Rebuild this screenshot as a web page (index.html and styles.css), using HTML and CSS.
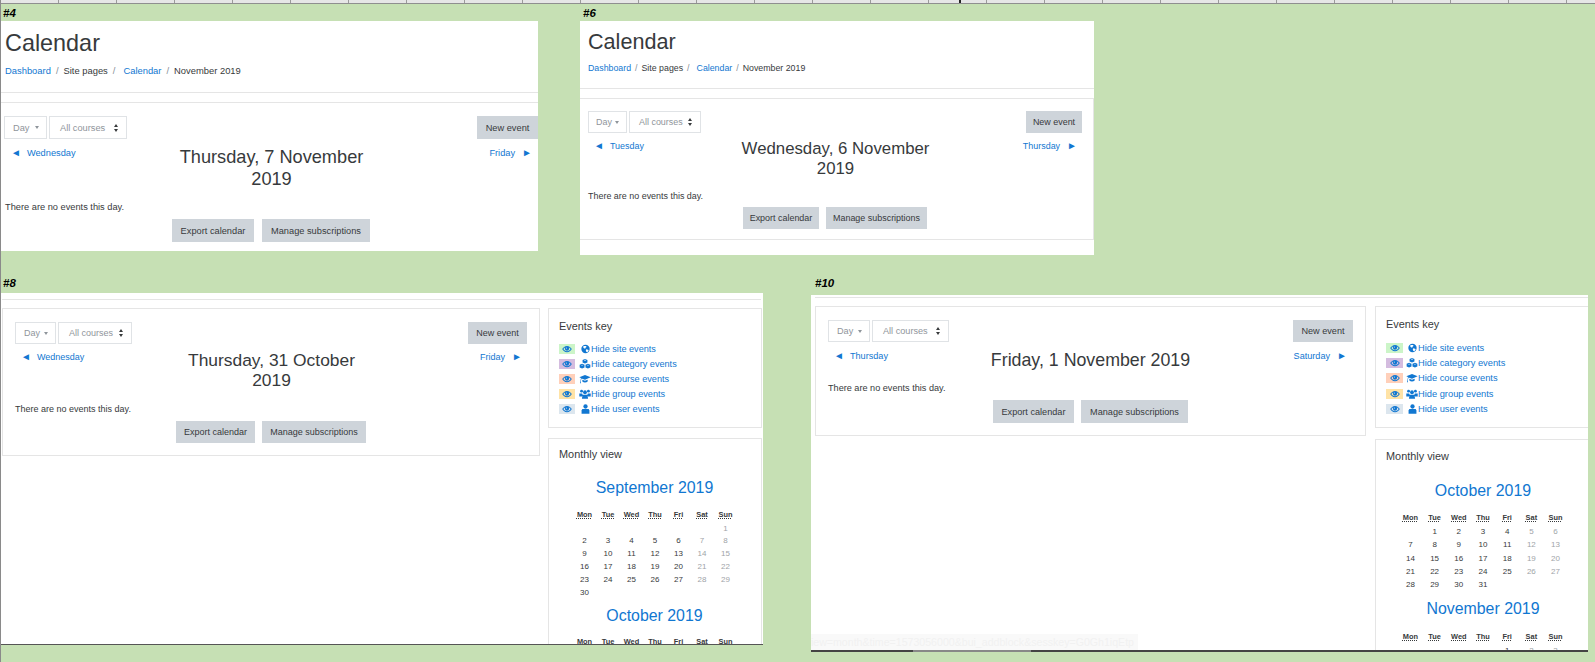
FILE: index.html
```html
<!DOCTYPE html>
<html lang="en">
<head>
  <meta charset="UTF-8">
  <title>Calendar screenshots</title>
  <link rel="stylesheet" href="styles.css">
</head>
<body>
  <svg class="defs" width="0" height="0" aria-hidden="true">
    <symbol id="i-eye" viewBox="0 0 16 12"><path fill-rule="evenodd" d="M8 1C4.600 1 1.900 3.200.3 6c1.600 2.800 4.300 5 7.700 5s6.100-2.200 7.700-5C14.100 3.200 11.400 1 8 1zM2.200 6C3.100 4.700 4.100 3.700 5.400 3 4.900 3.600 4.600 4.300 4.600 5.200c0 1.900 1.500 3.400 3.400 3.400s3.400-1.500 3.400-3.400c0-.9-.3-1.600-.8-2.200 1.300.7 2.300 1.700 3.200 3-1.400 2-3.400 3.600-5.800 3.600S3.600 8 2.200 6z"/><circle cx="7" cy="4.400" r="1" fill="#fff" opacity=".7"/></symbol>
    <symbol id="i-globe" viewBox="0 0 14 14"><path fill-rule="evenodd" d="M7 .5a6.500 6.500 0 1 0 0 13 6.500 6.500 0 0 0 0-13zM3 3.500l2-1.300 3 .2.500 1.600-1.500 1-.5 1.500-2-.5zM8 7.500l3 .5 1 1-2 3-1.500-.2-1-2z"/></symbol>
    <symbol id="i-cubes" viewBox="0 0 16 14"><path fill-rule="evenodd" d="M8 0l3.400 1.300v3.500L8 6.200 4.600 4.800V1.300zM8 1.200L6.400 1.800 8 2.400l1.600-.6zM3.900 6.800l3.400 1.300v3.800l-3.400 1.500L.5 12V8.100zM3.900 8L2.300 8.600l1.600.6 1.600-.6zM12.100 6.800l3.400 1.300V12l-3.400 1.400L8.700 11.900V8.100zM12.100 8l-1.600.6 1.600.6 1.600-.6z"/></symbol>
    <symbol id="i-cap" viewBox="0 0 18 14"><path d="M9 1L.5 4.500 3 5.600 2.200 9.500l-.7 4h1.400l-.1-4 1-3.400L9 8l8.500-3.500zM5 8.200v2.500c1 1.100 2.500 1.700 4 1.700s3-.6 4-1.700V8.200L9 9.800z"/></symbol>
    <symbol id="i-users" viewBox="0 0 16 14"><circle cx="3.200" cy="3" r="2"/><circle cx="12.800" cy="3" r="2"/><circle cx="8" cy="4.500" r="2.700"/><path d="M0 6.200h4l.6 2-1 2.300H0zM12 6.200h4v4.300h-3.600l-1-2.300zM4.500 8h7l.8 5.500H3.700z"/></symbol>
    <symbol id="i-user" viewBox="0 0 12 14"><circle cx="6" cy="3.500" r="3"/><path d="M1.500 7h9l1 2v4.500H.5V9z"/></symbol>
  </svg>

  <div class="ruler"><i class="cursor"></i></div>
  <i class="row-mark"></i>

  <section class="shot shot-4">
    <b class="tag">#4</b>
    <div class="shot-body">
      <header class="page-head">
        <h1>Calendar</h1>
        <nav class="crumbs"><a href="#">Dashboard</a><i>/</i><span>Site pages</span><i>/</i><a class="far" href="#">Calendar</a><i>/</i><span>November 2019</span></nav>
      </header>
      <main class="card">
        <div class="toolbar">
          <div class="filters"><span class="ctl ctl-day">Day<u class="caret"></u></span><span class="ctl ctl-course">All courses<u class="updown"></u></span></div>
          <a class="btn" href="#">New event</a>
        </div>
        <div class="day-nav">
          <a class="prev" href="#"><small>◄</small>Wednesday</a>
          <h2>Thursday, 7 November 2019</h2>
          <a class="next" href="#">Friday<small>►</small></a>
        </div>
        <p class="empty">There are no events this day.</p>
        <div class="actions"><a class="btn" href="#">Export calendar</a><a class="btn" href="#">Manage subscriptions</a></div>
      </main>
    </div>
  </section>

  <section class="shot shot-6">
    <b class="tag">#6</b>
    <div class="shot-body">
      <header class="page-head">
        <h1>Calendar</h1>
        <nav class="crumbs"><a href="#">Dashboard</a><i>/</i><span>Site pages</span><i>/</i><a class="far" href="#">Calendar</a><i>/</i><span>November 2019</span></nav>
      </header>
      <main class="card">
        <div class="toolbar">
          <div class="filters"><span class="ctl ctl-day">Day<u class="caret"></u></span><span class="ctl ctl-course">All courses<u class="updown"></u></span></div>
          <a class="btn" href="#">New event</a>
        </div>
        <div class="day-nav">
          <a class="prev" href="#"><small>◄</small>Tuesday</a>
          <h2>Wednesday, 6 November 2019</h2>
          <a class="next" href="#">Thursday<small>►</small></a>
        </div>
        <p class="empty">There are no events this day.</p>
        <div class="actions"><a class="btn" href="#">Export calendar</a><a class="btn" href="#">Manage subscriptions</a></div>
      </main>
    </div>
  </section>

  <section class="shot shot-8">
    <b class="tag">#8</b>
    <div class="shot-body">
      <div class="top-rule"></div>
      <div class="columns">
        <main class="card">
          <div class="toolbar">
            <div class="filters"><span class="ctl ctl-day">Day<u class="caret"></u></span><span class="ctl ctl-course">All courses<u class="updown"></u></span></div>
            <a class="btn" href="#">New event</a>
          </div>
          <div class="day-nav">
            <a class="prev" href="#"><small>◄</small>Wednesday</a>
            <h2>Thursday, 31 October 2019</h2>
            <a class="next" href="#">Friday<small>►</small></a>
          </div>
          <p class="empty">There are no events this day.</p>
          <div class="actions"><a class="btn" href="#">Export calendar</a><a class="btn" href="#">Manage subscriptions</a></div>
        </main>
        <aside class="side">
          <div class="box">
            <h4>Events key</h4>
            <ul class="key">
              <li><span class="swatch sw-site"><svg><use href="#i-eye"/></svg></span><span class="kicon"><svg class="sm"><use href="#i-globe"/></svg></span><a href="#">Hide site events</a></li>
              <li><span class="swatch sw-cat"><svg><use href="#i-eye"/></svg></span><span class="kicon"><svg><use href="#i-cubes"/></svg></span><a href="#">Hide category events</a></li>
              <li><span class="swatch sw-course"><svg><use href="#i-eye"/></svg></span><span class="kicon"><svg><use href="#i-cap"/></svg></span><a href="#">Hide course events</a></li>
              <li><span class="swatch sw-group"><svg><use href="#i-eye"/></svg></span><span class="kicon"><svg><use href="#i-users"/></svg></span><a href="#">Hide group events</a></li>
              <li><span class="swatch sw-user"><svg><use href="#i-eye"/></svg></span><span class="kicon"><svg class="sm"><use href="#i-user"/></svg></span><a href="#">Hide user events</a></li>
            </ul>
          </div>
          <div class="box">
            <h4>Monthly view</h4>
            <h3><a href="#">September 2019</a></h3>
            <div class="month">
              <b>Mon</b><b>Tue</b><b>Wed</b><b>Thu</b><b>Fri</b><b>Sat</b><b>Sun</b>
              <span></span><span></span><span></span><span></span><span></span><span></span><span class="we">1</span>
              <span>2</span><span>3</span><span>4</span><span>5</span><span>6</span><span class="we">7</span><span class="we">8</span>
              <span>9</span><span>10</span><span>11</span><span>12</span><span>13</span><span class="we">14</span><span class="we">15</span>
              <span>16</span><span>17</span><span>18</span><span>19</span><span>20</span><span class="we">21</span><span class="we">22</span>
              <span>23</span><span>24</span><span>25</span><span>26</span><span>27</span><span class="we">28</span><span class="we">29</span>
              <span>30</span>
            </div>
            <h3><a href="#">October 2019</a></h3>
            <div class="month">
              <b>Mon</b><b>Tue</b><b>Wed</b><b>Thu</b><b>Fri</b><b>Sat</b><b>Sun</b>
            </div>
          </div>
        </aside>
      </div>
    </div>
  </section>

  <section class="shot shot-10">
    <b class="tag">#10</b>
    <div class="shot-body">
      <div class="top-rule"></div>
      <div class="columns">
        <main class="card">
          <div class="toolbar">
            <div class="filters"><span class="ctl ctl-day">Day<u class="caret"></u></span><span class="ctl ctl-course">All courses<u class="updown"></u></span></div>
            <a class="btn" href="#">New event</a>
          </div>
          <div class="day-nav">
            <a class="prev" href="#"><small>◄</small>Thursday</a>
            <h2>Friday, 1 November 2019</h2>
            <a class="next" href="#">Saturday<small>►</small></a>
          </div>
          <p class="empty">There are no events this day.</p>
          <div class="actions"><a class="btn" href="#">Export calendar</a><a class="btn" href="#">Manage subscriptions</a></div>
        </main>
        <aside class="side">
          <div class="box">
            <h4>Events key</h4>
            <ul class="key">
              <li><span class="swatch sw-site"><svg><use href="#i-eye"/></svg></span><span class="kicon"><svg class="sm"><use href="#i-globe"/></svg></span><a href="#">Hide site events</a></li>
              <li><span class="swatch sw-cat"><svg><use href="#i-eye"/></svg></span><span class="kicon"><svg><use href="#i-cubes"/></svg></span><a href="#">Hide category events</a></li>
              <li><span class="swatch sw-course"><svg><use href="#i-eye"/></svg></span><span class="kicon"><svg><use href="#i-cap"/></svg></span><a href="#">Hide course events</a></li>
              <li><span class="swatch sw-group"><svg><use href="#i-eye"/></svg></span><span class="kicon"><svg><use href="#i-users"/></svg></span><a href="#">Hide group events</a></li>
              <li><span class="swatch sw-user"><svg><use href="#i-eye"/></svg></span><span class="kicon"><svg class="sm"><use href="#i-user"/></svg></span><a href="#">Hide user events</a></li>
            </ul>
          </div>
          <div class="box">
            <h4>Monthly view</h4>
            <h3><a href="#">October 2019</a></h3>
            <div class="month">
              <b>Mon</b><b>Tue</b><b>Wed</b><b>Thu</b><b>Fri</b><b>Sat</b><b>Sun</b>
              <span></span><span>1</span><span>2</span><span>3</span><span>4</span><span class="we">5</span><span class="we">6</span>
              <span>7</span><span>8</span><span>9</span><span>10</span><span>11</span><span class="we">12</span><span class="we">13</span>
              <span>14</span><span>15</span><span>16</span><span>17</span><span>18</span><span class="we">19</span><span class="we">20</span>
              <span>21</span><span>22</span><span>23</span><span>24</span><span>25</span><span class="we">26</span><span class="we">27</span>
              <span>28</span><span>29</span><span>30</span><span>31</span>
            </div>
            <h3><a href="#">November 2019</a></h3>
            <div class="month">
              <b>Mon</b><b>Tue</b><b>Wed</b><b>Thu</b><b>Fri</b><b>Sat</b><b>Sun</b>
              <span></span><span></span><span></span><span></span><span>1</span><span class="we">2</span><span class="we">3</span>
            </div>
          </div>
        </aside>
      </div>
      <div class="status-url"><span>view.php?view=month&amp;time=1573056000&amp;bui_addblock&amp;sesskey=G0Gh1iqEtp</span></div>
      <i class="scroll-bar"><i class="scroll-thumb"></i></i>
    </div>
  </section>
</body>
</html>
```

FILE: styles.css
```css
html, body {
  margin: 0;
  height: 100%;
  overflow: hidden;
}

body {
  position: relative;
  background-color: #c6e0b4;
  font-family: "Liberation Sans", Arial, sans-serif;
  border-left: 1px solid #8a8a8a;
  box-sizing: border-box;
}

a {
  color: #1177d1;
  text-decoration: none;
}

.defs {
  position: absolute;
}

/* spreadsheet column header */
.ruler {
  position: absolute;
  left: 0;
  right: 0;
  top: 0;
  height: 3px;
  background: repeating-linear-gradient(to right, #e6e6e6 0, #e6e6e6 57px, #9a9a9a 57px, #9a9a9a 58px);
  border-bottom: 1px solid #8f8f8f;
}

.cursor {
  position: absolute;
  left: 958px;
  top: 0;
  width: 2px;
  height: 3px;
  background: #222;
}

.row-mark {
  position: absolute;
  left: -1px;
  top: 561px;
  width: 1px;
  height: 20px;
  background: #1d7a3c;
}

/* one pasted picture */
.shot {
  position: absolute;
  color: #373a3c;
}

.shot-body {
  position: relative;
  height: 100%;
  overflow: hidden;
  background: #fff;
}

.tag {
  position: absolute;
  color: #000;
  font-size: 11.5px;
  font-style: italic;
  line-height: 12px;
  white-space: nowrap;
}

.page-head {
  box-sizing: border-box;
  border-bottom: 1px solid #e5e5e5;
}

h1 {
  margin: 0;
  font-weight: 400;
}

.crumbs {
  display: flex;
  white-space: nowrap;
}

.crumbs i {
  font-style: normal;
  color: #868e96;
  margin: 0 5px;
}

.crumbs .far {
  margin-left: 3px;
}

.card {
  box-sizing: border-box;
  border: 1px solid #e5e5e5;
}

.toolbar {
  display: flex;
  justify-content: space-between;
  align-items: stretch;
}

.filters {
  display: flex;
  gap: 2px;
}

.ctl {
  display: flex;
  align-items: center;
  justify-content: space-between;
  box-sizing: border-box;
  border: 1px solid #e0e3e6;
  color: #8f959b;
}

.caret {
  width: 0;
  height: 0;
  border: 2.5px solid transparent;
  border-top: 3px solid #8f959b;
  border-bottom: 0;
}

.updown {
  width: 0;
  height: 6px;
  border-left: 2.5px solid transparent;
  border-right: 2.5px solid transparent;
  background: none;
  position: relative;
}

.updown::before,
.updown::after {
  content: "";
  position: absolute;
  left: -2.5px;
  border-left: 2.5px solid transparent;
  border-right: 2.5px solid transparent;
}

.updown::before {
  top: -1px;
  border-bottom: 3px solid #373a3c;
}

.updown::after {
  bottom: -1px;
  border-top: 3px solid #373a3c;
}

.btn {
  display: flex;
  align-items: center;
  justify-content: center;
  box-sizing: border-box;
  background-color: #ced4da;
  color: #373a3c;
  white-space: nowrap;
}

.day-nav {
  display: grid;
  align-items: start;
}

.day-nav small {
  font-size: 10px;
}

.prev small {
  margin-right: 6px;
}

.next {
  text-align: right;
}

.next small {
  margin-left: 7px;
}

h2 {
  margin: 0;
  font-weight: 400;
  text-align: center;
}

.empty {
  margin: 0;
}

.actions {
  display: flex;
  justify-content: center;
}

.columns {
  display: flex;
  align-items: flex-start;
}

.top-rule {
  box-sizing: border-box;
  border-bottom: 1px solid #e5e5e5;
}

.side {
  display: flex;
  flex-direction: column;
  flex: none;
}

.box {
  box-sizing: border-box;
  border: 1px solid #e5e5e5;
}

h4 {
  margin: 0;
  font-size: 10.9px;
  line-height: 14px;
  font-weight: 400;
}

.key {
  list-style: none;
  margin: 0;
  padding: 0;
}

.key li {
  display: flex;
  align-items: center;
  white-space: nowrap;
}

.swatch {
  display: flex;
  align-items: center;
  justify-content: center;
  flex: none;
  width: 16px;
  height: 10px;
}

.swatch svg {
  width: 10px;
  height: 8px;
  fill: #1177d1;
}

.kicon {
  display: flex;
  justify-content: center;
  flex: none;
  width: 12px;
  margin-left: 4px;
}

.kicon svg {
  width: 12px;
  height: 10px;
  fill: #1177d1;
}

.kicon svg.sm {
  width: 9px;
}

.sw-site { background: #ccf5c8; }
.sw-cat { background: #d4bcdf; }
.sw-course { background: #ffd0ba; }
.sw-group { background: #ffe3a6; }
.sw-user { background: #dce6ee; }

h3 {
  margin: 0;
  font-size: 15.9px;
  line-height: 20px;
  font-weight: 400;
  text-align: center;
}

.month {
  display: grid;
  justify-content: center;
  text-align: center;
  font-size: 8px;
}

.month b {
  font-size: 7.4px;
  text-decoration: underline dotted;
}

.we {
  color: #a0a4a8;
}

/* #4 */
.shot-4 { left: 0; top: 21px; width: 537px; height: 230px; }
.shot-4 .tag { left: 2px; top: -14px; }
.shot-4 .shot-body { font-size: 9.25px; line-height: 14px; }
.shot-4 .page-head { height: 72px; padding: 7px 0 0 4px; }
.shot-4 h1 { font-size: 23.4px; line-height: 30px; margin-bottom: 6px; }
.shot-4 .crumbs { font-size: 9.4px; }
.shot-4 .card { margin-top: 9px; padding: 13px 0 0 3px; border-width: 1px 0 0; }
.shot-4 .toolbar { height: 23px; }
.shot-4 .ctl-day { width: 43px; padding: 0 7px 0 8px; }
.shot-4 .ctl-course { width: 78px; padding: 0 8px 0 10px; }
.shot-4 .toolbar .btn { width: 61px; }
.shot-4 .day-nav { grid-template-columns: 1fr 206px 1fr; margin-top: 7px; padding: 0 6px 0 7px; }
.shot-4 h2 { font-size: 18.2px; line-height: 22px; }
.shot-4 .empty { margin-top: 10px; padding-left: 1px; }
.shot-4 .actions { gap: 8px; margin-top: 5px; }
.shot-4 .actions .btn { height: 23px; }
.shot-4 .actions .btn:first-child { width: 82px; }
.shot-4 .actions .btn:last-child { width: 108px; }

/* #6 */
.shot-6 { left: 579px; top: 21px; width: 514px; height: 234px; }
.shot-6 .tag { left: 3px; top: -14px; }
.shot-6 .shot-body { font-size: 8.95px; line-height: 14px; }
.shot-6 .page-head { height: 68px; padding: 6px 0 0 8px; }
.shot-6 h1 { font-size: 21.6px; line-height: 30px; margin-bottom: 4px; }
.shot-6 .crumbs { font-size: 8.8px; }
.shot-6 .crumbs i { margin: 0 4px; }
.shot-6 .crumbs .far { margin-left: 3px; }
.shot-6 .card { margin-top: 9px; padding: 12px 11px 11px 8px; height: 142px; border-width: 1px 1px 1px 0; }
.shot-6 .toolbar { height: 22px; }
.shot-6 .ctl-day { width: 39px; padding: 0 7px 0 7px; }
.shot-6 .ctl-course { width: 72px; padding: 0 8px 0 9px; }
.shot-6 .toolbar .btn { width: 56px; }
.shot-6 .day-nav { grid-template-columns: 1fr 220px 1fr; margin-top: 6px; padding: 0 5px 0 6px; }
.shot-6 h2 { font-size: 16.8px; line-height: 20px; }
.shot-6 .empty { margin-top: 10px; }
.shot-6 .actions { gap: 7px; margin-top: 4px; }
.shot-6 .actions .btn { height: 22px; }
.shot-6 .actions .btn:first-child { width: 76px; }
.shot-6 .actions .btn:last-child { width: 101px; }

/* #8 */
.shot-8 { left: 0; top: 293px; width: 762px; height: 352px; }
.shot-8 .tag { left: 2px; top: -16px; }
.shot-8 .shot-body { font-size: 9px; line-height: 14px; border-bottom: 1px solid #555; box-sizing: border-box; }
.shot-8 .top-rule { height: 7px; margin: 0 2px 0 1px; }
.shot-8 .columns { margin-top: 8px; padding-left: 1px; gap: 8px; }
.shot-8 .card { width: 538px; height: 148px; padding: 13px 12px 12px 12px; }
.shot-8 .toolbar { height: 22px; }
.shot-8 .ctl-day { width: 41px; padding: 0 7px 0 8px; }
.shot-8 .ctl-course { width: 74px; padding: 0 8px 0 10px; }
.shot-8 .toolbar .btn { width: 59px; }
.shot-8 .day-nav { grid-template-columns: 1fr 190px 1fr; margin-top: 6px; padding: 0 5px 0 6px; }
.shot-8 h2 { font-size: 17.4px; line-height: 20px; }
.shot-8 .empty { margin-top: 12px; }
.shot-8 .actions { gap: 7px; margin-top: 5px; }
.shot-8 .actions .btn { height: 22px; }
.shot-8 .actions .btn:first-child { width: 79px; }
.shot-8 .actions .btn:last-child { width: 104px; }
.shot-8 .side { width: 214px; gap: 10px; }
.shot-8 .box:first-child { height: 120px; padding: 10px 0 0 10px; }
.shot-8 .box:last-child { height: 220px; padding: 8px 0 0 10px; }
.shot-8 .key { margin-top: 8px; font-size: 9.15px; }
.shot-8 .key li { height: 15px; }
.shot-8 h3 { margin: 17px 11px 10px 0; }
.shot-8 .month { grid-template-columns: repeat(7, 23.5px); grid-auto-rows: 13px; line-height: 13px; margin-right: 10px; }
.shot-8 .month b { margin-bottom: -1px; }
.shot-8 .month span:nth-child(8),
.shot-8 .month span:nth-child(14) { margin-top: 1px; }
.shot-8 .month + h3 { margin-top: 7px; margin-bottom: 9px; }

/* #10 */
.shot-10 { left: 810px; top: 295px; width: 777px; height: 357px; }
.shot-10 .tag { left: 4px; top: -18px; }
.shot-10 .shot-body { font-size: 9.13px; line-height: 14px; }
.shot-10 .top-rule { height: 3px; margin: 0 0 0 4px; }
.shot-10 .columns { margin-top: 8px; padding-left: 4px; gap: 9px; }
.shot-10 .card { width: 551px; height: 130px; padding: 13px 12px 12px 12px; flex: none; }
.shot-10 .toolbar { height: 22px; }
.shot-10 .ctl-day { width: 42px; padding: 0 7px 0 8px; }
.shot-10 .ctl-course { width: 77px; padding: 0 8px 0 10px; }
.shot-10 .toolbar .btn { width: 60px; }
.shot-10 .day-nav { grid-template-columns: 1fr 240px 1fr; margin-top: 7px; padding: 0 6px 0 6px; }
.shot-10 h2 { font-size: 17.8px; line-height: 22px; }
.shot-10 .empty { margin-top: 10px; }
.shot-10 .actions { gap: 7px; margin-top: 5px; }
.shot-10 .actions .btn { height: 23px; }
.shot-10 .actions .btn:first-child { width: 81px; }
.shot-10 .actions .btn:last-child { width: 107px; }
.shot-10 .side { width: 216px; gap: 11px; flex: none; }
.shot-10 .box:first-child { height: 122px; padding: 10px 0 0 10px; }
.shot-10 .box:last-child { height: 220px; padding: 9px 0 0 10px; }
.shot-10 .swatch { width: 17px; }
.shot-10 .kicon { margin-left: 3px; }
.shot-10 .key { margin-top: 9px; font-size: 9.3px; }
.shot-10 .key li { height: 15.4px; }
.shot-10 h3 { margin: 18px 10px 10px 0; }
.shot-10 .month { grid-template-columns: repeat(7, 24.2px); grid-auto-rows: 13.2px; line-height: 13.2px; margin-right: 10px; }
.shot-10 .month b { margin-bottom: -1px; }
.shot-10 .month span { position: relative; top: 1px; }
.shot-10 .month + h3 { margin-top: 9px; margin-bottom: 11px; }

/* browser status bubble, over the page */
.status-url {
  position: absolute;
  left: 0;
  bottom: 2px;
  width: 327px;
  height: 16px;
  display: flex;
  justify-content: flex-end;
  padding-right: 4px;
  box-sizing: border-box;
  overflow: hidden;
  background: #f9f9f9;
  color: #f1f1f1;
  font-size: 10.6px;
  line-height: 16px;
  white-space: nowrap;
}

.scroll-bar {
  position: absolute;
  left: 0;
  right: 0;
  bottom: 0;
  height: 2px;
  background: #444;
}

.scroll-thumb {
  position: absolute;
  left: 102px;
  top: 0;
  width: 118px;
  height: 2px;
  background: #888;
}
```
